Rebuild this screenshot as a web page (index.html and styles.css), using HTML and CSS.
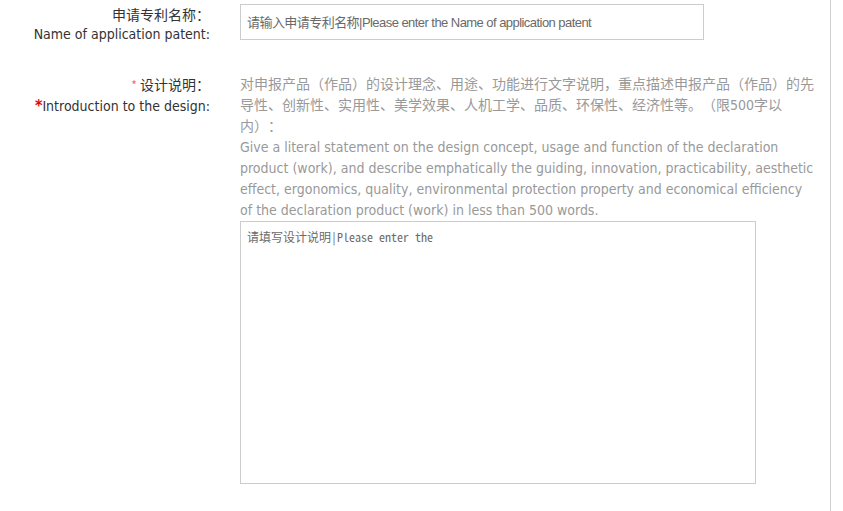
FILE: index.html
```html
<!DOCTYPE html>
<html lang="zh">
<head>
<meta charset="utf-8">
<link rel="stylesheet" href="styles.css">
</head>
<body>
<div class="page">
  <div class="form-row row-name">
    <div class="label">
      <div class="label-cn">申请专利名称：</div>
      <div class="label-en">Name of application patent:</div>
    </div>
    <div class="field">
      <input class="text-input" type="text" placeholder="请输入申请专利名称|Please enter the Name of application patent">
    </div>
  </div>
  <div class="form-row row-design">
    <div class="label">
      <div class="label-cn"><span class="star-small">*</span> 设计说明：</div>
      <div class="label-en"><span class="star">*</span>Introduction to the design:</div>
    </div>
    <div class="field">
      <div class="desc">对申报产品（作品）的设计理念、用途、功能进行文字说明，重点描述申报产品（作品）的先导性、创新性、实用性、美学效果、人机工学、品质、环保性、经济性等。（限500字以内）：<br>Give a literal statement on the design concept, usage and function of the declaration product (work), and describe emphatically the guiding, innovation, practicability, aesthetic effect, ergonomics, quality, environmental protection property and economical efficiency of the declaration product (work) in less than 500 words.</div>
      <textarea class="text-area" placeholder="请填写设计说明|Please enter the"></textarea>
    </div>
  </div>
</div>
</body>
</html>
```
FILE: styles.css
```css
html, body {
  margin: 0;
  padding: 0;
  background: #fff;
}
.page {
  width: 831px;
  min-height: 511px;
  border-right: 1px solid #d0d0d0;
  padding-top: 4px;
  box-sizing: border-box;
  font-family: "DejaVu Sans Condensed", "DejaVu Sans", "Noto Sans CJK SC", sans-serif;
  text-spacing-trim: space-all;
}
.form-row {
  display: grid;
  grid-template-columns: 210px 576px;
  column-gap: 30px;
}
.row-design {
  margin-top: 30px;
}
.label {
  text-align: right;
  color: #333;
  font-size: 14px;
}
.row-name .label {
  line-height: 20px;
}
.row-design .label {
  line-height: 21px;
}
.label-cn {
  font-family: "Noto Sans CJK SC", sans-serif;
}
.star-small {
  color: #f66;
  font-size: 12px;
}
.star {
  color: #e00;
  font-weight: bold;
  font-size: 16px;
}
.text-input {
  display: block;
  width: 464px;
  height: 36px;
  box-sizing: border-box;
  border: 1px solid #ccc;
  padding: 0 6px;
  margin: 0;
  font-family: "Liberation Sans", "Noto Sans CJK SC", sans-serif;
  font-size: 13px;
  letter-spacing: -0.55px;
  color: #333;
  outline: none;
}
.text-input::placeholder {
  color: #6a6a6a;
}
.desc {
  color: #999;
  font-size: 14px;
  line-height: 21px;
  text-spacing-trim: space-all;
}
.text-area {
  display: block;
  width: 516px;
  height: 263px;
  box-sizing: border-box;
  border: 1px solid #ccc;
  padding: 6px 6px;
  margin: 0;
  resize: none;
  font-family: "Noto Sans Mono CJK SC", "Liberation Mono", monospace;
  font-size: 12px;
  color: #333;
  outline: none;
}
.text-area::placeholder {
  color: #6a6a6a;
}
```
